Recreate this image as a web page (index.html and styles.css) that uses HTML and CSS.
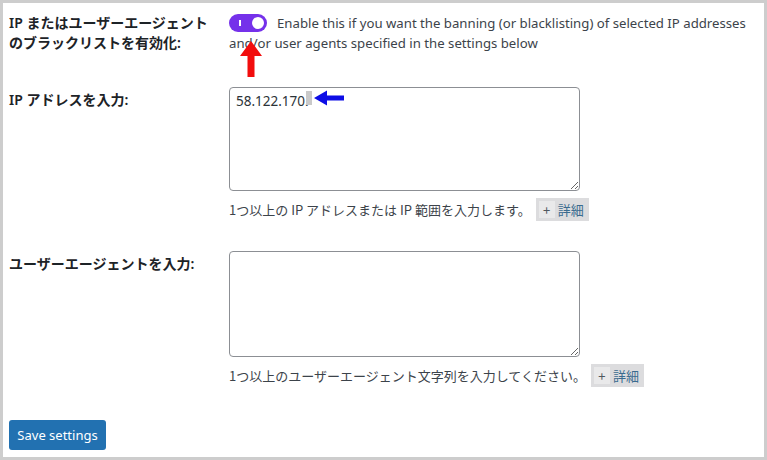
FILE: index.html
```html
<!DOCTYPE html>
<html lang="ja">
<head>
<meta charset="utf-8">
<title>Blacklist settings</title>
<link rel="stylesheet" href="styles.css">
</head>
<body>
<div class="frame">
  <div class="row row-toggle">
    <div class="label">IP またはユーザーエージェント<br>のブラックリストを有効化:</div>
    <div class="field desc"><span class="toggle"><span class="toggle-bar"></span><span class="toggle-knob"></span></span>Enable this if you want the banning (or blacklisting) of selected IP addresses and/or user agents specified in the settings below</div>
  </div>
  <div class="row row-ip">
    <div class="label label-pad">IP アドレスを入力:</div>
    <div class="field">
      <textarea class="ta">58.122.170.</textarea>
      <div class="help"><span>1つ以上の IP アドレスまたは IP 範囲を入力します。</span><span class="more"><span class="plus">+</span><span class="more-text">詳細</span></span></div>
    </div>
  </div>
  <div class="row row-ua">
    <div class="label label-pad">ユーザーエージェントを入力:</div>
    <div class="field">
      <textarea class="ta ta-ua"></textarea>
      <div class="help"><span>1つ以上のユーザーエージェント文字列を入力してください。</span><span class="more"><span class="plus">+</span><span class="more-text">詳細</span></span></div>
    </div>
  </div>
  <div class="actions"><button class="save">Save settings</button></div>
</div>
<span class="sel"></span>
<svg class="arrow-red" width="24" height="37" viewBox="0 0 24 37"><polygon points="12,0 23,15 15.5,15 15.5,36 8.5,36 8.5,15 1,15" fill="#f20d0d"/></svg>
<svg class="arrow-blue" width="31" height="16" viewBox="0 0 31 16"><polygon points="0,8 13,0.5 13,5.5 30,5.5 30,10.5 13,10.5 13,15.5" fill="#0d0de6"/></svg>
</body>
</html>
```

FILE: styles.css
```css
* { box-sizing: border-box; }
html, body { margin: 0; padding: 0; background: #fff; }
body {
  position: relative;
  width: 767px;
  height: 460px;
  font-family: "Noto Sans", "Noto Sans CJK JP", sans-serif;
  color: #1d2327;
}
.frame {
  width: 767px;
  height: 460px;
  border: 3px solid #cdcdcd;
  padding: 10px 6px 0 6px;
  display: flex;
  flex-direction: column;
}
.row {
  display: flex;
}
.label {
  width: 220px;
  flex: none;
  font-size: 14px;
  line-height: 20px;
  font-weight: 600;
  color: #1d2327;
}
.label-pad { padding-top: 3px; }
.field { flex: 1; min-width: 0; }
.desc {
  font-size: 13.2px;
  line-height: 20px;
  color: #3c434a;
  padding-right: 4px;
}
.toggle {
  display: inline-block;
  position: relative;
  width: 38px;
  height: 18px;
  border-radius: 9px;
  background: #7531ea;
  vertical-align: -4px;
  margin-right: 10px;
}
.toggle-bar {
  position: absolute;
  left: 10px;
  top: 6px;
  width: 2px;
  height: 6px;
  background: #fff;
}
.toggle-knob {
  position: absolute;
  right: 3px;
  top: 3px;
  width: 12px;
  height: 12px;
  border-radius: 50%;
  background: #fff;
}
.row-ip { margin-top: 34px; }
.row-ua { margin-top: 30px; }
.ta {
  display: block;
  width: 351px;
  height: 104px;
  border: 1px solid #8c8f94;
  border-radius: 4px;
  padding: 3px 6px;
  font-family: "Noto Sans", "Noto Sans CJK JP", sans-serif;
  font-size: 13.5px;
  line-height: 20px;
  color: #2c3338;
  margin: 0;
}
.ta-ua { height: 106px; }
.help {
  display: flex;
  align-items: center;
  margin-top: 7px;
  font-size: 13px;
  line-height: 23px;
  color: #3c434a;
  font-family: "Noto Sans CJK JP", "Noto Sans", sans-serif;
}
.more {
  display: inline-flex;
  align-items: center;
  margin-left: 5px;
  height: 23px;
  padding: 0 3px;
  background: #dcdcde;
  font-size: 13px;
}
.plus {
  display: inline-block;
  width: 16px;
  height: 17px;
  line-height: 17px;
  text-align: center;
  background: #e9e9ea;
  color: #50575e;
  margin-right: 3px;
}
.more-text {
  color: #3a6b8f;
  padding-right: 2px;
}
.actions {
  margin-top: 33px;
}
.save {
  width: 97px;
  height: 30px;
  border: none;
  border-radius: 3px;
  background: #2271b1;
  color: #fff;
  font-family: "Noto Sans", sans-serif;
  font-size: 13px;
  padding: 0;
}
.sel {
  position: absolute;
  left: 306px;
  top: 91px;
  width: 6px;
  height: 14px;
  background: #c9c9c9;
}
.arrow-red {
  position: absolute;
  left: 239px;
  top: 41px;
}
.arrow-blue {
  position: absolute;
  left: 314px;
  top: 90px;
}
```
